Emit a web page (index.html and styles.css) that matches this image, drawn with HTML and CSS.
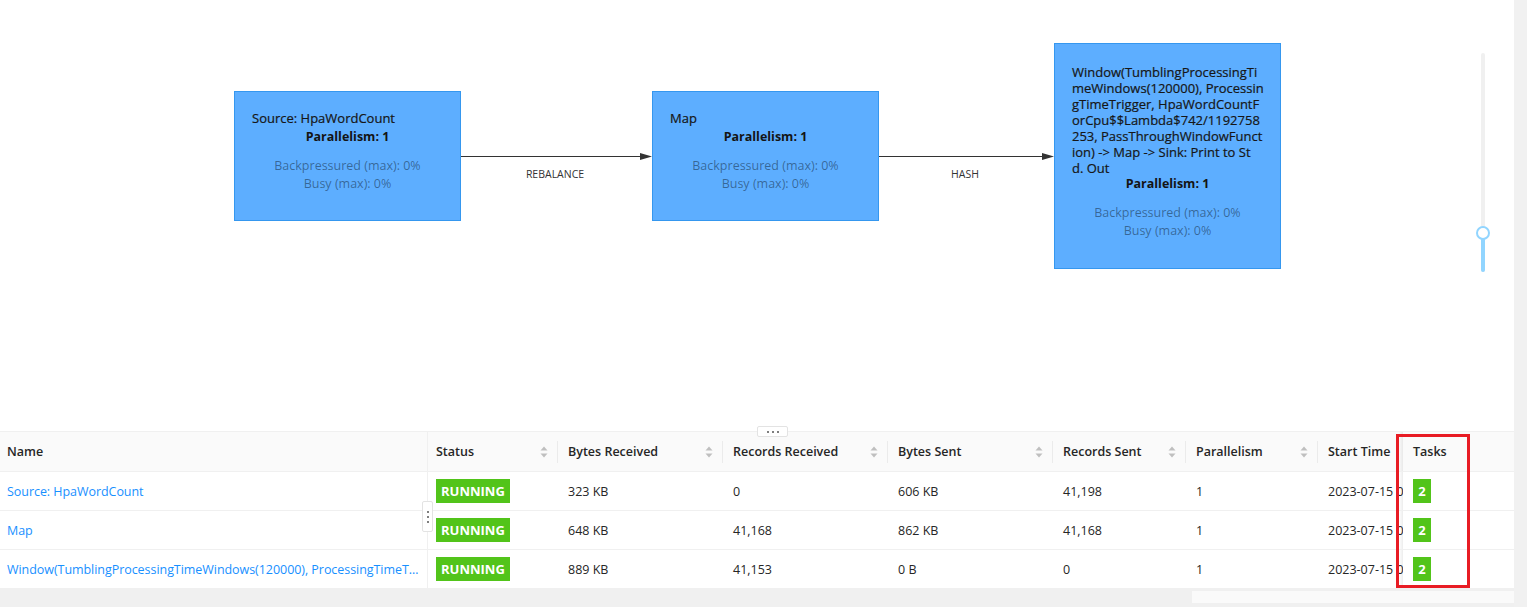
FILE: index.html
```html
<!DOCTYPE html>
<html>
<head>
<meta charset="utf-8">
<title>Job Graph</title>
<link rel="stylesheet" href="styles.css">
</head>
<body>
<div class="page">
  <div class="main">
    <div class="graph">
      <svg class="edges" width="1514" height="431" viewBox="0 0 1514 431">
        <line x1="461" y1="156.5" x2="641" y2="156.5"></line>
        <polygon points="652,156.5 640,153 640,160"></polygon>
        <line x1="879" y1="156.5" x2="1043" y2="156.5"></line>
        <polygon points="1054,156.5 1042,153 1042,160"></polygon>
        <text x="555" y="178">REBALANCE</text>
        <text x="965" y="178">HASH</text>
      </svg>

      <div class="node n1">
        <div class="node-title">Source: HpaWordCount</div>
        <div class="node-par">Parallelism: 1</div>
        <div class="node-metrics">Backpressured (max): 0%<br>Busy (max): 0%</div>
      </div>
      <div class="node n2">
        <div class="node-title">Map</div>
        <div class="node-par">Parallelism: 1</div>
        <div class="node-metrics">Backpressured (max): 0%<br>Busy (max): 0%</div>
      </div>
      <div class="node n3">
        <div class="node-title">Window(TumblingProcessingTi<br>meWindows(120000), Processin<br>gTimeTrigger, HpaWordCountF<br>orCpu$$Lambda$742/1192758<br>253, PassThroughWindowFunct<br>ion) -&gt; Map -&gt; Sink: Print to St<br>d. Out</div>
        <div class="node-par">Parallelism: 1</div>
        <div class="node-metrics">Backpressured (max): 0%<br>Busy (max): 0%</div>
      </div>

      <div class="slider">
        <div class="slider-rail"></div>
        <div class="slider-track"></div>
        <div class="slider-handle"></div>
      </div>
    </div>

    <div class="table-wrap">
      <div class="tr thead">
        <div class="td td-name">Name</div>
        <div class="td td-status sep">Status<svg class="sorter" width="8" height="14" viewBox="0 0 8 14"><path d="M0.5 5.5 L4 1.5 L7.5 5.5 Z"/><path d="M0.5 8.5 L4 12.5 L7.5 8.5 Z"/></svg></div>
        <div class="td sep">Bytes Received<svg class="sorter" width="8" height="14" viewBox="0 0 8 14"><path d="M0.5 5.5 L4 1.5 L7.5 5.5 Z"/><path d="M0.5 8.5 L4 12.5 L7.5 8.5 Z"/></svg></div>
        <div class="td sep">Records Received<svg class="sorter" width="8" height="14" viewBox="0 0 8 14"><path d="M0.5 5.5 L4 1.5 L7.5 5.5 Z"/><path d="M0.5 8.5 L4 12.5 L7.5 8.5 Z"/></svg></div>
        <div class="td sep">Bytes Sent<svg class="sorter" width="8" height="14" viewBox="0 0 8 14"><path d="M0.5 5.5 L4 1.5 L7.5 5.5 Z"/><path d="M0.5 8.5 L4 12.5 L7.5 8.5 Z"/></svg></div>
        <div class="td sep">Records Sent<svg class="sorter" width="8" height="14" viewBox="0 0 8 14"><path d="M0.5 5.5 L4 1.5 L7.5 5.5 Z"/><path d="M0.5 8.5 L4 12.5 L7.5 8.5 Z"/></svg></div>
        <div class="td sep">Parallelism<svg class="sorter" width="8" height="14" viewBox="0 0 8 14"><path d="M0.5 5.5 L4 1.5 L7.5 5.5 Z"/><path d="M0.5 8.5 L4 12.5 L7.5 8.5 Z"/></svg></div>
        <div class="td td-clip">Start Time</div>
        <div class="td td-tasks">Tasks</div>
      </div>

      <div class="tr">
        <div class="td td-name"><a class="link">Source: HpaWordCount</a></div>
        <div class="td td-status"><span class="tag">RUNNING</span></div>
        <div class="td">323 KB</div>
        <div class="td">0</div>
        <div class="td">606 KB</div>
        <div class="td">41,198</div>
        <div class="td">1</div>
        <div class="td td-clip">2023-07-15 09:41:27</div>
        <div class="td td-tasks"><span class="badge">2</span></div>
      </div>
      <div class="tr">
        <div class="td td-name"><a class="link">Map</a></div>
        <div class="td td-status"><span class="tag">RUNNING</span></div>
        <div class="td">648 KB</div>
        <div class="td">41,168</div>
        <div class="td">862 KB</div>
        <div class="td">41,168</div>
        <div class="td">1</div>
        <div class="td td-clip">2023-07-15 09:41:27</div>
        <div class="td td-tasks"><span class="badge">2</span></div>
      </div>
      <div class="tr">
        <div class="td td-name"><a class="link">Window(TumblingProcessingTimeWindows(120000), ProcessingTimeTrigger, HpaWordCountForCpu$$Lambda$742/1192758253, PassThroughWindowFunction) -&gt; Map -&gt; Sink: Print to Std. Out</a></div>
        <div class="td td-status"><span class="tag">RUNNING</span></div>
        <div class="td">889 KB</div>
        <div class="td">41,153</div>
        <div class="td">0 B</div>
        <div class="td">0</div>
        <div class="td">1</div>
        <div class="td td-clip">2023-07-15 09:41:27</div>
        <div class="td td-tasks"><span class="badge">2</span></div>
      </div>

      <div class="hscroll"><div class="hscroll-thumb"></div></div>

      <div class="handle-h"><span class="dot"></span><span class="dot"></span><span class="dot"></span></div>
      <div class="handle-v"><span class="dot"></span><span class="dot"></span><span class="dot"></span></div>
      <div class="mark"></div>
    </div>
  </div>
  <div class="vscroll"></div>
</div>
</body>
</html>
```

FILE: styles.css
```css
* { box-sizing: border-box; }
html, body { margin: 0; padding: 0; }
body {
  font-family: "Open Sans", "Noto Sans", sans-serif;
  background: #fff;
  width: 1527px;
  height: 607px;
  overflow: hidden;
}
.page { display: flex; height: 607px; }
.main { width: 1514px; display: flex; flex-direction: column; }
.vscroll { width: 13px; background: #f1f1f1; }

/* ---------- graph ---------- */
.graph { position: relative; height: 431px; flex: none; }
.edges { position: absolute; left: 0; top: 0; }
.edges line { stroke: #333; stroke-width: 1; }
.edges polygon { fill: #333; }
.edges text {
  font-family: "Open Sans", "Noto Sans", sans-serif;
  font-size: 10.5px;
  fill: #333;
  text-anchor: middle;
}

.node {
  position: absolute;
  width: 227px;
  background: #5daeff;
  border: 1px solid #3597ef;
  padding: 18px 17px 0 17px;
}
.n1 { left: 234px; top: 91px; height: 130px; }
.n2 { left: 652px; top: 91px; height: 130px; }
.n3 { left: 1054px; top: 43px; height: 226px; }

.node-title {
  font-size: 13px;
  line-height: 16px;
  color: #161616;
  white-space: nowrap;
  -webkit-text-stroke: 0.2px #161616;
}
.node-par {
  margin-top: 2px;
  font-size: 12.5px;
  font-weight: 700;
  line-height: 18px;
  text-align: center;
  color: #141414;
}
.node-metrics {
  margin-top: 11px;
  font-size: 12.5px;
  line-height: 18px;
  text-align: center;
  color: rgba(0, 0, 0, 0.42);
}
.n3 .node-title { padding-top: 2px; }
.n3 .node-par { margin-top: -1px; }

.slider { position: absolute; left: 1476px; top: 53px; width: 14px; height: 219px; }
.slider-rail { position: absolute; left: 5px; top: 0; width: 4px; height: 219px; background: #f0f0f0; border-radius: 2px; }
.slider-track { position: absolute; left: 5px; bottom: 0; width: 4px; height: 34px; background: #91d5ff; border-radius: 2px; }
.slider-handle { position: absolute; left: 0; top: 173px; width: 14px; height: 14px; border: 2px solid #91d5ff; border-radius: 50%; background: #fff; }

/* ---------- table ---------- */
.table-wrap {
  position: relative;
  border-top: 1px solid #f0f0f0;
  flex: 1;
  display: flex;
  flex-direction: column;
}
.tr {
  display: grid;
  grid-template-columns: 428px 130px 165px 165px 165px 133px 132px 85px 111px;
  height: 39px;
  border-bottom: 1px solid #f0f0f0;
  font-size: 12.5px;
  color: #262626;
  flex: none;
}
.thead { height: 40px; background: #fafafa; font-weight: 600; }
.td {
  position: relative;
  display: flex;
  align-items: center;
  padding: 0 10px;
  white-space: nowrap;
  overflow: hidden;
  min-width: 0;
}
.td-name { padding: 0 7px; border-right: 1px solid #f0f0f0; }
.td-status { padding-left: 8px; }
.td-clip { padding-right: 0; }
.td-tasks { overflow: visible; background: #fff; }
.thead .td-tasks { background: #fafafa; }
.td-tasks::before {
  content: "";
  position: absolute;
  left: -4px;
  top: 0;
  bottom: 0;
  width: 4px;
  background: linear-gradient(to right, rgba(0, 0, 0, 0), rgba(0, 0, 0, 0.07));
}
.sep::after {
  content: "";
  position: absolute;
  right: 0;
  top: 50%;
  margin-top: -11px;
  width: 1px;
  height: 22px;
  background: rgba(0, 0, 0, 0.06);
}
.sorter { position: absolute; right: 10px; top: 50%; margin-top: -7px; fill: #bfbfbf; }

.link {
  display: block;
  min-width: 0;
  overflow: hidden;
  text-overflow: ellipsis;
  white-space: nowrap;
  color: #1890ff;
  cursor: pointer;
  letter-spacing: -0.05px;
}
.tag {
  display: inline-block;
  height: 24px;
  line-height: 24px;
  padding: 0 5px;
  background: #52c41a;
  color: #fff;
  font-weight: 700;
  font-size: 13px;
  margin-top: -1px;
}
.badge {
  display: inline-block;
  width: 18px;
  height: 24px;
  line-height: 24px;
  text-align: center;
  background: #52c41a;
  color: #fff;
  font-weight: 700;
  font-size: 13px;
  margin-top: -1px;
}

.hscroll { height: 18px; background: #f0f0f0; padding: 2px 0 0 1192px; flex: none; }
.hscroll-thumb { width: 322px; height: 12px; background: #fafafa; }

.handle-h {
  position: absolute;
  left: 757px;
  top: -6px;
  width: 31px;
  height: 11px;
  background: #fff;
  border: 1px solid #e3e3e3;
  border-radius: 2px;
  display: flex;
  align-items: center;
  justify-content: center;
  gap: 3px;
}
.handle-v {
  position: absolute;
  left: 422px;
  top: 69px;
  width: 11px;
  height: 31px;
  background: #fff;
  border: 1px solid #e3e3e3;
  border-radius: 2px;
  display: flex;
  flex-direction: column;
  align-items: center;
  justify-content: center;
  gap: 3px;
}
.dot { width: 2px; height: 2px; background: #555; border-radius: 1px; }

.mark {
  position: absolute;
  left: 1396px;
  top: 2px;
  width: 74px;
  height: 154px;
  border: 3px solid #e81c24;
}
```
